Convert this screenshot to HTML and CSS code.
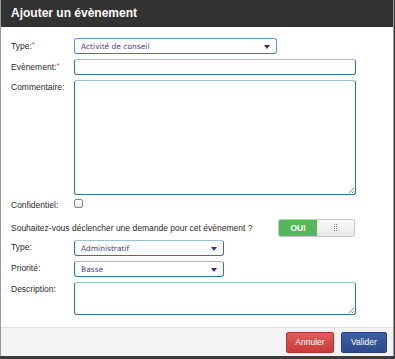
FILE: index.html
```html
<!DOCTYPE html>
<html lang="fr">
<head>
<meta charset="utf-8">
<link rel="stylesheet" href="styles.css">
</head>
<body>
<div class="modal">
  <div class="modal-header">Ajouter un évènement</div>
  <div class="modal-body">
    <div class="row r-type">
      <label class="lbl">Type:<span class="req">*</span></label>
      <div class="select focus w-long"><span>Activité de conseil</span><i class="arrow"></i></div>
    </div>
    <div class="row r-evt">
      <label class="lbl">Evènement:<span class="req">*</span></label>
      <div class="input w-full h-input"></div>
    </div>
    <div class="row r-com">
      <label class="lbl">Commentaire:</label>
      <div class="input w-full h-com"><i class="grip"></i></div>
    </div>
    <div class="row r-conf">
      <label class="lbl">Confidentiel:</label>
      <span class="check"></span>
    </div>
    <div class="row r-ask">
      <span class="ask">Souhaitez-vous déclencher une demande pour cet évènement ?</span>
      <div class="toggle"><span class="on">OUI</span><span class="off"><svg class="dots" width="4" height="8" viewBox="0 0 4 8"><g fill="#8a8a8a"><rect x="0" y="0" width="1" height="1"/><rect x="2" y="0" width="1" height="1"/><rect x="0" y="2" width="1" height="1"/><rect x="2" y="2" width="1" height="1"/><rect x="0" y="4" width="1" height="1"/><rect x="2" y="4" width="1" height="1"/><rect x="0" y="6" width="1" height="1"/><rect x="2" y="6" width="1" height="1"/></g></svg></span></div>
    </div>
    <div class="row r-type2">
      <label class="lbl">Type:</label>
      <div class="select w-short"><span>Administratif</span><i class="arrow"></i></div>
    </div>
    <div class="row r-prio">
      <label class="lbl">Priorité:</label>
      <div class="select w-short"><span>Basse</span><i class="arrow"></i></div>
    </div>
    <div class="row r-desc">
      <label class="lbl">Description:</label>
      <div class="input w-full h-desc"><i class="grip"></i></div>
    </div>
  </div>
  <div class="modal-footer">
    <button class="btn btn-cancel">Annuler</button>
    <button class="btn btn-ok">Valider</button>
  </div>
</div>
</body>
</html>
```

FILE: styles.css
```css
html, body {
  margin: 0;
  padding: 0;
}
body {
  background: #3c3c3c;
  width: 395px;
  height: 359px;
  overflow: hidden;
  font-family: "Liberation Sans", Arial, sans-serif;
}
.modal {
  width: 392px;
  height: 356px;
  background: #fff;
  border: 1px solid #9a9a9a;
  border-top: 0;
  border-bottom: 0;
  display: flex;
  flex-direction: column;
}
.modal-header {
  height: 27px;
  background: #323232;
  color: #fff;
  font-weight: bold;
  font-size: 12px;
  line-height: 27px;
  padding-left: 10px;
  flex: none;
}
.modal-body {
  flex: 1;
  padding: 11px 0 0 10px;
}
.row {
  display: flex;
  align-items: flex-start;
}
.lbl {
  width: 63px;
  flex: none;
  font-size: 8.5px;
  color: #2a2a2a;
  padding-top: 2px;
  line-height: 10px;
}
.req {
  color: #d9534f;
  font-size: 8px;
  vertical-align: 2px;
}
.select, .input {
  box-sizing: border-box;
  border: 1px solid #2a7d8c;
  border-top-color: #9cc2cc;
  border-radius: 3px;
  background: #fff;
  position: relative;
}
.select {
  height: 16px;
  display: flex;
  align-items: center;
  padding-left: 6px;
  font-family: "DejaVu Sans", Verdana, sans-serif;
  font-size: 7.5px;
  color: #4a3d8f;
}
.select.focus {
  border-color: #5a95e0;
  border-bottom-color: #3a78d0;
}
.arrow {
  position: absolute;
  right: 6px;
  top: 6px;
  width: 0;
  height: 0;
  border-left: 3px solid transparent;
  border-right: 3px solid transparent;
  border-top: 4px solid #3a2c88;
}
.w-long { width: 203px; }
.w-short { width: 150px; }
.w-full { width: 282px; }
.h-input { height: 16px; }
.h-com { height: 115px; }
.h-desc { height: 33px; }
.grip {
  position: absolute;
  right: 1px;
  bottom: 1px;
  width: 5px;
  height: 5px;
  background: linear-gradient(135deg, transparent 45%, #888 45%, #888 55%, transparent 55%, transparent 75%, #888 75%, #888 85%, transparent 85%);
}
.r-type { height: 16px; margin-top: 0; }
.r-evt { margin-top: 5px; }
.r-com { margin-top: 5px; }
.r-conf { margin-top: 3px; height: 12px; }
.check {
  box-sizing: border-box;
  width: 9px;
  height: 9px;
  border: 1px solid #8a8a8a;
  border-radius: 2px;
  background: linear-gradient(#fff, #e6e6e6);
  margin-top: 1px;
}
.r-ask {
  margin-top: 9px;
  height: 18px;
  align-items: center;
}
.ask {
  font-size: 8.5px;
  color: #2a2a2a;
  width: 267px;
  flex: none;
}
.toggle {
  display: flex;
  width: 77px;
  height: 18px;
  box-sizing: border-box;
  border: 1px solid #c8c8c8;
  border-radius: 2px;
  overflow: hidden;
}
.toggle .on {
  width: 38px;
  background: #56b65a;
  color: #fff;
  font-weight: bold;
  font-size: 8.5px;
  display: flex;
  align-items: center;
  justify-content: center;
}
.toggle .off {
  flex: 1;
  background: linear-gradient(#fafafa, #e8e8e8);
  display: flex;
  align-items: center;
  justify-content: center;
}
.dots {
  display: block;
}
.r-type2 { margin-top: 3px; }
.r-prio { margin-top: 5px; }
.r-desc { margin-top: 5px; }
.modal-footer {
  flex: none;
  height: 28px;
  border-top: 1px solid #e2e2e2;
  background: #f3f3f3;
  display: flex;
  justify-content: flex-end;
  align-items: center;
  gap: 7px;
  padding-right: 6px;
}
.btn {
  height: 21px;
  border-radius: 2px;
  color: #fff;
  font-family: "Liberation Sans", Arial, sans-serif;
  font-size: 8.5px;
  padding: 0;
  cursor: pointer;
}
.btn-cancel {
  width: 48px;
  background: linear-gradient(#e45a5a, #c93a3a);
  border: 1px solid #b33232;
}
.btn-ok {
  width: 46px;
  background: linear-gradient(#3f5fa6, #2d4a8c);
  border: 1px solid #27407a;
}
```
